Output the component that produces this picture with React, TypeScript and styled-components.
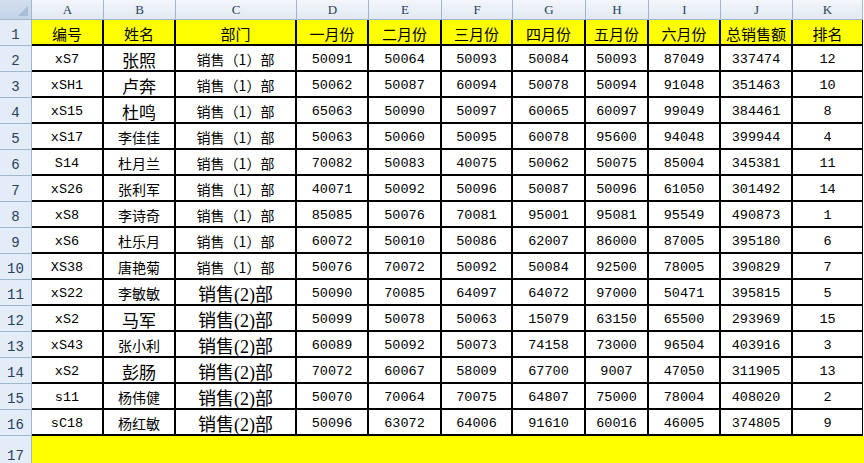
import React from "react";
import styled, { createGlobalStyle, css } from "styled-components";

const Global = createGlobalStyle`
  html, body { margin: 0; padding: 0; background: #ffffff; overflow: hidden; }
  * { box-sizing: border-box; }
`;

const COLS = [72, 72, 121, 72, 73, 71, 73, 63, 72, 72, 70];
const LETTERS = ["A", "B", "C", "D", "E", "F", "G", "H", "I", "J", "K"];
const HEAD = ["编号", "姓名", "部门", "一月份", "二月份", "三月份", "四月份", "五月份", "六月份", "总销售额", "排名"];

const D1 = "销售（1）部";
const rows: { code: string; name: string; big: boolean; dept: 1 | 2; vals: (number | string)[] }[] = [
  { code: "xS7", name: "张照", big: true, dept: 1, vals: [50091, 50064, 50093, 50084, 50093, 87049, 337474, 12] },
  { code: "xSH1", name: "卢奔", big: true, dept: 1, vals: [50062, 50087, 60094, 50078, 50094, 91048, 351463, 10] },
  { code: "xS15", name: "杜鸣", big: true, dept: 1, vals: [65063, 50090, 50097, 60065, 60097, 99049, 384461, 8] },
  { code: "xS17", name: "李佳佳", big: false, dept: 1, vals: [50063, 50060, 50095, 60078, 95600, 94048, 399944, 4] },
  { code: "S14", name: "杜月兰", big: false, dept: 1, vals: [70082, 50083, 40075, 50062, 50075, 85004, 345381, 11] },
  { code: "xS26", name: "张利军", big: false, dept: 1, vals: [40071, 50092, 50096, 50087, 50096, 61050, 301492, 14] },
  { code: "xS8", name: "李诗奇", big: false, dept: 1, vals: [85085, 50076, 70081, 95001, 95081, 95549, 490873, 1] },
  { code: "xS6", name: "杜乐月", big: false, dept: 1, vals: [60072, 50010, 50086, 62007, 86000, 87005, 395180, 6] },
  { code: "XS38", name: "唐艳菊", big: false, dept: 1, vals: [50076, 70072, 50092, 50084, 92500, 78005, 390829, 7] },
  { code: "xS22", name: "李敏敏", big: false, dept: 2, vals: [50090, 70085, 64097, 64072, 97000, 50471, 395815, 5] },
  { code: "xS2", name: "马军", big: true, dept: 2, vals: [50099, 50078, 50063, 15079, 63150, 65500, 293969, 15] },
  { code: "xS43", name: "张小利", big: false, dept: 2, vals: [60089, 50092, 50073, 74158, 73000, 96504, 403916, 3] },
  { code: "xS2", name: "彭肠", big: true, dept: 2, vals: [70072, 60067, 58009, 67700, 9007, 47050, 311905, 13] },
  { code: "s11", name: "杨伟健", big: false, dept: 2, vals: [50070, 70064, 70075, 64807, 75000, 78004, 408020, 2] },
  { code: "sC18", name: "杨红敏", big: false, dept: 2, vals: [50096, 63072, 64006, 91610, 60016, 46005, 374805, 9] },
];

const Sheet = styled.div`
  display: grid;
  grid-template-columns: 32px ${COLS.map((w) => `${w}px`).join(" ")} 1fr;
  grid-template-rows: 20px repeat(16, 26px) 40px;
  width: 864px;
  height: 463px;
  overflow: hidden;
`;

const Corner = styled.div`
  position: relative;
  background: linear-gradient(#d3dfee, #c3d3e8);
  border-right: 1px solid #9eb6ce;
  border-bottom: 1px solid #9eb6ce;
  &::after {
    content: "";
    position: absolute;
    right: 3px;
    bottom: 3px;
    width: 0;
    height: 0;
    border-left: 10px solid transparent;
    border-bottom: 10px solid #a9bdd6;
  }
`;

const ColHead = styled.div`
  display: flex;
  align-items: center;
  justify-content: center;
  background: linear-gradient(#f3f6fa, #e2e9f2);
  border-right: 1px solid #9eb6ce;
  border-bottom: 1px solid #9eb6ce;
  font-family: "Liberation Serif", serif;
  font-size: 13px;
  color: #27415f;
  padding-top: 1px;
`;

const RowHead = styled.div<{ $last?: boolean }>`
  display: flex;
  align-items: flex-end;
  justify-content: center;
  background: #e4ecf7;
  border-right: 1px solid #9eb6ce;
  border-bottom: 1px solid #9eb6ce;
  font-family: "Liberation Mono", monospace;
  font-size: 14px;
  color: #27415f;
  padding-bottom: 2px;
  ${(p) =>
    p.$last &&
    css`
      align-items: flex-start;
      padding-top: 12px;
      border-bottom: none;
    `}
`;

const Cell = styled.div<{ $head?: boolean; $font?: "mono" | "cjk" | "big" | "dept2"; $edge?: boolean }>`
  display: flex;
  align-items: center;
  justify-content: center;
  padding-top: 2px;
  white-space: nowrap;
  overflow: hidden;
  background: ${(p) => (p.$head ? "#ffff00" : "#ffffff")};
  border-right: 2px solid #000000;
  border-bottom: 2px solid #000000;
  color: #000000;
  ${(p) => p.$edge && css`border-right: 1px solid #000000;`}
  ${(p) => {
    switch (p.$font) {
      case "cjk":
        return css`
          font-family: "Noto Sans CJK SC", sans-serif;
          font-size: 14px;
        `;
      case "big":
        return css`
          font-family: "Noto Sans CJK SC", sans-serif;
          font-size: 17px;
        `;
      case "dept2":
        return css`
          font-family: "Liberation Serif", "Noto Sans CJK SC", serif;
          font-size: 18px;
        `;
      default:
        return css`
          font-family: "Liberation Mono", "Noto Sans CJK SC", monospace;
          font-size: 13.5px;
        `;
    }
  }}
  ${(p) =>
    p.$head &&
    css`
      font-family: "Noto Sans CJK SC", sans-serif;
      font-size: 15px;
    `}
`;

const Filler = styled.div`
  background: #ffffff;
`;

const YellowBand = styled.div`
  grid-column: 2 / -1;
  background: #ffff00;
`;

export default function App() {
  return (
    <>
      <Global />
      <Sheet>
        <Corner />
        {LETTERS.map((l) => (
          <ColHead key={l}>{l}</ColHead>
        ))}
        <Filler />

        <RowHead>1</RowHead>
        {HEAD.map((h, i) => (
          <Cell key={h} $head $edge={i === HEAD.length - 1}>
            {h}
          </Cell>
        ))}
        <Filler />

        {rows.map((r, idx) => (
          <React.Fragment key={idx}>
            <RowHead>{idx + 2}</RowHead>
            <Cell $font="mono">{r.code}</Cell>
            <Cell $font={r.big ? "big" : "cjk"}>{r.name}</Cell>
            {r.dept === 1 ? (
              <Cell $font="cjk">{D1}</Cell>
            ) : (
              <Cell $font="dept2">销售(2)部</Cell>
            )}
            {r.vals.map((v, j) => (
              <Cell key={j} $font="mono" $edge={j === r.vals.length - 1}>
                {v}
              </Cell>
            ))}
            <Filler />
          </React.Fragment>
        ))}

        <RowHead $last>17</RowHead>
        <YellowBand />
      </Sheet>
    </>
  );
}
